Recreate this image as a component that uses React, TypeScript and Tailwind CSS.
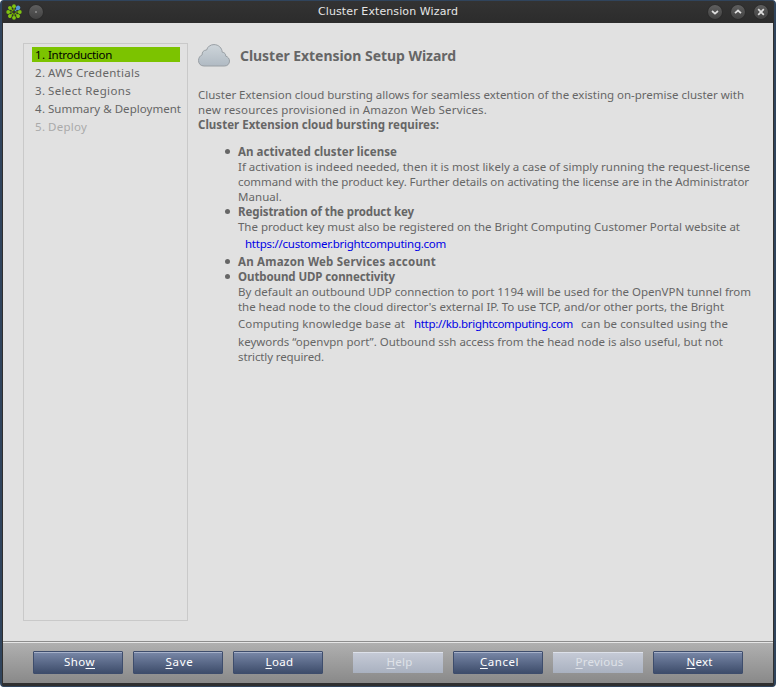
import { useLayoutEffect, useRef, useState, type ReactNode } from "react";

/* Text run tracked so that it fills exactly `width` pixels. */
function Fit({ width, className = "", children }: { width: number; className?: string; children: ReactNode }) {
  const ref = useRef<HTMLSpanElement>(null);
  const [spacing, setSpacing] = useState(0);
  useLayoutEffect(() => {
    const el = ref.current;
    if (!el) return;
    const count = (el.textContent ?? "").length;
    setSpacing((width - el.getBoundingClientRect().width) / count);
  }, [width]);
  return (
    <span ref={ref} className={`inline-block whitespace-pre ${className}`} style={{ letterSpacing: `${spacing}px` }}>
      {children}
    </span>
  );
}

function Line({ w, bold, children }: { w: number; bold?: boolean; children: ReactNode }) {
  return (
    <div className={`flex h-[15px] items-center ${bold ? "font-bold" : ""}`}>
      <Fit width={w}>{children}</Fit>
    </div>
  );
}

function Item({ title, w, children }: { title: string; w: number; children?: ReactNode }) {
  return (
    <li className="flex">
      <span className="mt-[5px] mr-[8px] h-[5px] w-[5px] shrink-0 rounded-full bg-[#666]" />
      <div>
        <Line w={w} bold>{title}</Line>
        {children}
      </div>
    </li>
  );
}

function Burst() {
  const petals = [0, 45, 90, 135, 180, 225, 270, 315];
  return (
    <svg width="16" height="16" viewBox="0 0 16 16">
      {petals.map((a) => (
        <g key={a} transform={`rotate(${a} 8 8)`}>
          <path d="M8 6.5V3" stroke={a === 45 ? "#5298d8" : "#76b900"} strokeWidth="1.2" />
          <circle cx="8" cy="2.2" r={a === 45 ? 2.2 : 1.9} fill={a === 45 ? "#5298d8" : "#7fc410"} />
        </g>
      ))}
    </svg>
  );
}

function Knob({ kind }: { kind: "dot" | "down" | "up" | "close" }) {
  const paths = { down: "M4 6L7 8.7L10 6", up: "M4 8.2L7 5.5L10 8.2", close: "M4.2 4.2L9.8 9.8M9.8 4.2L4.2 9.8", dot: "" };
  return (
    <span className="flex h-[14px] w-[14px] items-center justify-center rounded-full bg-linear-to-b from-[#5e5e5e] to-[#424242] shadow-[0_0_1px_#111]">
      <svg width="14" height="14" viewBox="0 0 14 14" fill="none">
        {kind === "dot" ? (
          <circle cx="7" cy="7" r="0.8" fill="#bbb" />
        ) : (
          <path d={paths[kind]} stroke="#dedede" strokeWidth="1.7" />
        )}
      </svg>
    </span>
  );
}

function Button({ before = "", hot, after = "", w, disabled }: { before?: string; hot: string; after?: string; w: number; disabled?: boolean }) {
  const look = disabled
    ? "h-[21px] border-t border-[#dde1ea] bg-linear-to-b from-[#c5cad6] to-[#a9b1c0] pb-[3px] text-[#dfe2e8]"
    : "h-[23px] rounded-[1px] border border-[#3e4d6c] bg-linear-to-b from-[#7988a8] to-[#3e4d6b] pb-px text-white shadow-[inset_0_1px_0_#a6b1c9]";
  return (
    <button className={`flex w-[90px] items-center justify-center pl-[3px] text-[11.5px] leading-[15px] ${look}`}>
      <Fit width={w}>
        {before}
        <span className="underline underline-offset-2">{hot}</span>
        {after}
      </Fit>
    </button>
  );
}

const steps = [
  { n: "1.", label: "Introduction", w: 64, look: "bg-[#7cc300] text-black" },
  { n: "2.", label: "AWS Credentials", w: 92, look: "" },
  { n: "3.", label: "Select Regions", w: 83, look: "" },
  { n: "4.", label: "Summary & Deployment", w: 133, look: "" },
  { n: "5.", label: "Deploy", w: 39, look: "text-[#aaa]" },
];

export default function App() {
  return (
    <div className="h-[687px] w-[776px] overflow-hidden bg-white font-['Noto_Sans',sans-serif] text-[11.5px] leading-[15px] text-[#666]">
      <div className="flex h-full flex-col overflow-hidden rounded-[4px] border-x-2 border-y border-[#30445c] bg-[#2f2f2f]">
        <header className="flex h-[22px] shrink-0 items-center bg-linear-to-b from-[#333] to-[#2c2c2c] pr-[6px] pb-px pl-1 font-['DejaVu_Sans',sans-serif] text-[11px] text-[#e6e6e6]">
          <div className="flex w-[312px] shrink-0 items-center gap-[7px]">
            <Burst />
            <Knob kind="dot" />
          </div>
          <Fit width={140}>Cluster Extension Wizard</Fit>
          <div className="ml-auto flex gap-[9px]">
            <Knob kind="down" />
            <Knob kind="up" />
            <Knob kind="close" />
          </div>
        </header>

        <div className="mx-px flex min-h-0 flex-1 flex-col bg-[#e1e1e1]">
          <main className="flex h-[618px] shrink-0 pt-5 pl-5">
            <nav className="h-[578px] w-[165px] shrink-0 border border-[#c9c9c9] pt-[3px] pl-2">
              {steps.map((s) => (
                <div key={s.n} className={`mb-[3px] flex h-[15px] w-[148px] items-center pl-[3px] ${s.look}`}>
                  <span className="w-[13px] shrink-0 tracking-[0.3px]">{s.n}</span>
                  <Fit width={s.w}>{s.label}</Fit>
                </div>
              ))}
            </nav>

            <section className="ml-[10px]">
              <h1 className="flex h-[24px] items-center gap-[10px] text-[14px] font-bold">
                <svg width="32" height="23" viewBox="0 0 32 23">
                  <defs>
                    <linearGradient id="sky" x1="0" y1="0" x2="0" y2="1">
                      <stop offset="0" stopColor="#ced5da" />
                      <stop offset="1" stopColor="#b0bac3" />
                    </linearGradient>
                  </defs>
                  <path
                    d="M6 22C2.5 22 .5 19.5 .5 16.5C.5 14 2 11.7 4.2 10.8C3.8 8.2 5.7 6 8.6 6C9.5 2.7 12.3 .6 16 .6C20.6 .6 24 4 24.2 8.2C26.9 8.5 27.9 10.3 27.7 12.1C30 12.8 31.5 14.8 31.5 17C31.5 20 29.3 22 26.5 22Z"
                    fill="url(#sky)"
                    stroke="#999fa4"
                  />
                </svg>
                <Fit width={216}>Cluster Extension Setup Wizard</Fit>
              </h1>

              <div className="mt-5">
                <Line w={546}>Cluster Extension cloud bursting allows for seamless extention of the existing on-premise cluster with</Line>
                <Line w={289}>new resources provisioned in Amazon Web Services.</Line>
                <Line w={241} bold>Cluster Extension cloud bursting requires:</Line>
              </div>

              <ul className="mt-3 ml-[27px]">
                <Item title="An activated cluster license" w={159}>
                  <Line w={512}>If activation is indeed needed, then it is most likely a case of simply running the request-license</Line>
                  <Line w={511}>command with the product key. Further details on activating the license are in the Administrator</Line>
                  <Line w={44}>Manual.</Line>
                </Item>
                <Item title="Registration of the product key" w={176}>
                  <Line w={502}>The product key must also be registered on the Bright Computing Customer Portal website at</Line>
                  <div className="flex h-5 items-center pb-[2px] pl-[7px] text-[#0000e6]">
                    <Fit width={201}>https://customer.brightcomputing.com</Fit>
                  </div>
                </Item>
                <Item title="An Amazon Web Services account" w={198} />
                <Item title="Outbound UDP connectivity" w={157}>
                  <Line w={513}>By default an outbound UDP connection to port 1194 will be used for the OpenVPN tunnel from</Line>
                  <Line w={486}>the head node to the cloud director's external IP. To use TCP, and/or other ports, the Bright</Line>
                  <div className="flex h-5 items-center pb-[2px]">
                    <Fit width={167}>Computing knowledge base at</Fit>
                    <Fit width={159} className="mr-[8px] ml-[9px] text-[#0000e6]">http://kb.brightcomputing.com</Fit>
                    <Fit width={147}>can be consulted using the</Fit>
                  </div>
                  <Line w={485}>keywords “openvpn port”. Outbound ssh access from the head node is also useful, but not</Line>
                  <Line w={86}>strictly required.</Line>
                </Item>
              </ul>
            </section>
          </main>

          <footer className="flex h-[42px] shrink-0 items-center gap-[10px] border-t border-[#8d8d8d] bg-linear-to-b from-[#b1b1b1] to-[#898989] pb-px pl-[30px] shadow-[inset_0_1px_0_#e6e6e6]">
            <Button before="Sho" hot="w" w={31} />
            <Button hot="S" after="ave" w={28} />
            <Button hot="L" after="oad" w={28} />
            <span className="w-[10px]" />
            <Button hot="H" after="elp" w={26} disabled />
            <Button hot="C" after="ancel" w={39} />
            <Button hot="P" after="revious" w={48} disabled />
            <Button hot="N" after="ext" w={26} />
          </footer>
        </div>
        <div className="h-[3px] shrink-0 bg-[#2f2f2f]" />
      </div>
    </div>
  );
}
